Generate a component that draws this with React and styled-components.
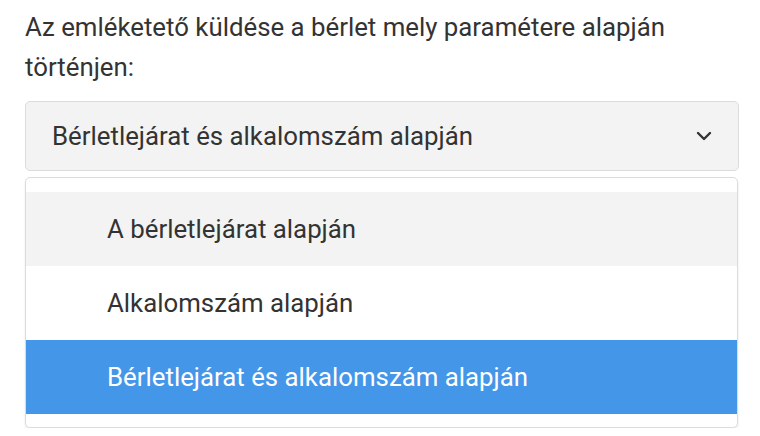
import { createGlobalStyle, styled } from "styled-components";

const GlobalStyle = createGlobalStyle`
  body {
    margin: 0;
    background: #fff;
    font-family: Roboto, "Liberation Sans", sans-serif;
    color: #333;
  }
`;

const Page = styled.div`
  padding: 7px 21px 0 25px;
`;

const Label = styled.p`
  margin: 0 0 14px;
  font-size: 25.8px;
  line-height: 40px;
  color: #333;
`;

const SelectBox = styled.div`
  height: 70px;
  box-sizing: border-box;
  display: flex;
  align-items: center;
  justify-content: space-between;
  padding: 0 26px 0 26px;
  background: #f3f3f3;
  border: 1px solid #dcdcdc;
  border-radius: 5px;
  font-size: 25.8px;
  color: #333;
`;

const Menu = styled.div`
  margin: 6px 1px 0 0;
  box-sizing: border-box;
  padding: 14px 0 13px;
  background: #fff;
  border: 1px solid #dcdcdc;
  border-radius: 5px;
  box-shadow: 0 2px 3px rgba(0, 0, 0, 0.08);
`;

const Item = styled.div`
  height: 74px;
  display: flex;
  align-items: center;
  padding-left: 81px;
  font-size: 25.8px;
  background: ${(p) => (p.$selected ? "#4496e8" : p.$hover ? "#f3f3f3" : "#fff")};
  color: ${(p) => (p.$selected ? "#fff" : "#333")};
`;

const Chevron = () => (
  <svg width="16" height="10" viewBox="0 0 16 10" fill="none">
    <path d="M2 2l6 6 6-6" stroke="#333" strokeWidth="2.4" strokeLinecap="round" strokeLinejoin="round" />
  </svg>
);

const options = [
  "A bérletlejárat alapján",
  "Alkalomszám alapján",
  "Bérletlejárat és alkalomszám alapján",
];

export default function App() {
  return (
    <Page>
      <GlobalStyle />
      <Label>
        Az emléketető küldése a bérlet mely paramétere alapján történjen:
      </Label>
      <SelectBox>
        <span>Bérletlejárat és alkalomszám alapján</span>
        <Chevron />
      </SelectBox>
      <Menu>
        {options.map((o, i) => (
          <Item key={o} $hover={i === 0} $selected={i === 2}>
            {o}
          </Item>
        ))}
      </Menu>
    </Page>
  );
}
